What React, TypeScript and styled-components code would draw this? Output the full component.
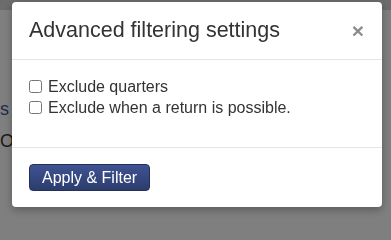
import React from "react";
import styled, { createGlobalStyle } from "styled-components";

const GlobalStyle = createGlobalStyle`
  html, body {
    margin: 0;
    padding: 0;
    height: 100%;
    overflow: hidden;
  }
  body {
    font-family: "Liberation Sans", Arial, sans-serif;
    background: #ffffff;
  }
`;

const Page = styled.div`
  min-height: 100vh;
  background: #ffffff;
`;

const Navbar = styled.div`
  height: 10px;
  background: #d8d8d8;
`;

const Content = styled.div`
  padding: 87px 0 0;
  display: flex;
  flex-direction: column;
  gap: 8px;
`;

const PageLine = styled.p<{ $tone: string }>`
  margin: 0;
  font-size: 18px;
  line-height: 24px;
  color: ${(p) => p.$tone};
  white-space: nowrap;
`;

const Backdrop = styled.div`
  position: fixed;
  inset: 0;
  background: rgba(0, 0, 0, 0.5);
`;

const Overlay = styled.div`
  position: fixed;
  inset: 0;
  display: flex;
  align-items: flex-start;
  padding: 2px 0 0 12px;
`;

const Modal = styled.div`
  width: 370px;
  background: #ffffff;
  border-radius: 4px;
  box-shadow: 0 3px 9px rgba(0, 0, 0, 0.3);
`;

const Header = styled.div`
  display: flex;
  align-items: center;
  justify-content: space-between;
  padding: 16px 18px 16px 17px;
  border-bottom: 1px solid #e5e5e5;
`;

const Title = styled.h4`
  margin: 0;
  font-size: 21.5px;
  line-height: 25px;
  font-weight: normal;
  color: #333333;
`;

const Close = styled.button`
  border: 0;
  padding: 0;
  background: none;
  font-family: "Liberation Sans", Arial, sans-serif;
  font-size: 21px;
  line-height: 21px;
  font-weight: bold;
  color: #8c8c8c;
  cursor: pointer;
`;

const Body = styled.div`
  padding: 16px 17px 29px;
`;

const Option = styled.label`
  display: flex;
  align-items: center;
  gap: 6px;
  font-size: 16px;
  line-height: 21px;
  color: #333333;
`;

const Check = styled.input`
  width: 13px;
  height: 13px;
  margin: 0;
`;

const Footer = styled.div`
  padding: 16px 17px;
  border-top: 1px solid #e5e5e5;
`;

const Button = styled.button`
  font-family: "Liberation Sans", Arial, sans-serif;
  font-size: 16px;
  line-height: 19px;
  padding: 3px 12px;
  color: #ffffff;
  background: linear-gradient(#3f5392, #2c3c6d);
  border: 1px solid #22305a;
  border-radius: 4px;
  cursor: pointer;
`;

export default function App() {
  return (
    <>
      <GlobalStyle />
      <Page>
        <Navbar />
        <Content>
          <PageLine $tone="#3c5a94">s f</PageLine>
          <PageLine $tone="#333333">O</PageLine>
        </Content>
      </Page>
      <Backdrop />
      <Overlay>
        <Modal>
          <Header>
            <Title>Advanced filtering settings</Title>
            <Close aria-label="Close">×</Close>
          </Header>
          <Body>
            <Option>
              <Check type="checkbox" />
              Exclude quarters
            </Option>
            <Option>
              <Check type="checkbox" />
              Exclude when a return is possible.
            </Option>
          </Body>
          <Footer>
            <Button>Apply &amp; Filter</Button>
          </Footer>
        </Modal>
      </Overlay>
    </>
  );
}
